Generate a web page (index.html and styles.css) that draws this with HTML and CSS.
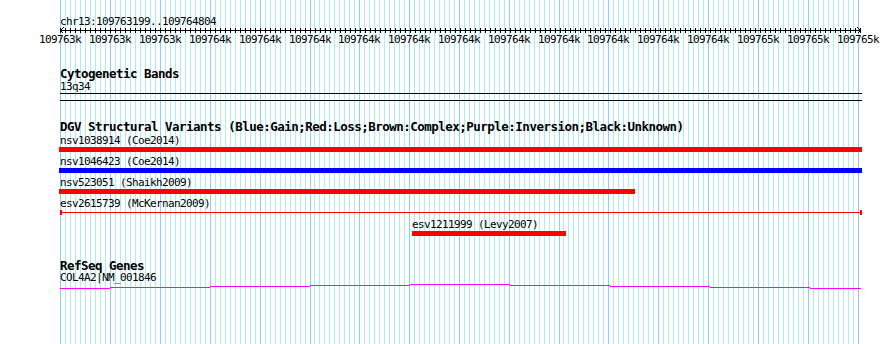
FILE: index.html
```html
<!DOCTYPE html>
<html lang="en">
<head>
  <meta charset="UTF-8">
  <title>chr13:109763199..109764804</title>
  <link rel="stylesheet" href="styles.css">
</head>
<body>
  <div class="panel"> <!-- the whole track image, grid drawn as background -->
    <div class="title">chr13:109763199..109764804</div>

    <!-- ruler with ticks and arrows -->
    <svg class="axis" width="810" height="7" shape-rendering="crispEdges">
      <defs>
        <pattern id="ticks" x="5" y="0" width="5" height="7" patternUnits="userSpaceOnUse">
          <path d="M0.5 1v5" stroke="#000"/>
        </pattern>
      </defs>
      <rect x="5" y="0" width="801" height="7" fill="url(#ticks)"/>
      <path d="M5 3.5H806M8.5 0.5L5.5 3.5L8.5 6.5M802.5 0.5L805.5 3.5L802.5 6.5" stroke="#000" fill="none"/>
    </svg>
    <div class="scale">
      <span>109763k</span><span>109763k</span><span>109763k</span>
      <span>109764k</span><span>109764k</span><span>109764k</span>
      <span class="nudge">109764k</span><span>109764k</span><span>109764k</span>
      <span>109764k</span><span>109764k</span><span class="nudge">109764k</span>
      <span>109764k</span><span>109764k</span><span>109765k</span>
      <span>109765k</span><span>109765k</span>
    </div>

    <!-- Cytogenetic Bands -->
    <div class="track cyto">
      <div class="track-name">Cytogenetic Bands</div>
      <div class="label short">13q34</div>
      <div class="band"></div>
    </div>

    <!-- DGV -->
    <div class="track dgv">
      <div class="track-name">DGV Structural Variants (Blue:Gain;Red:Loss;Brown:Complex;Purple:Inversion;Black:Unknown)</div>
      <div class="feat">
        <div class="label">nsv1038914 (Coe2014)</div>
        <div class="bar loss" style="margin-left:-1px;width:803px"></div>
      </div>
      <div class="feat">
        <div class="label">nsv1046423 (Coe2014)</div>
        <div class="bar gain" style="margin-left:-1px;width:803px"></div>
      </div>
      <div class="feat">
        <div class="label">nsv523051 (Shaikh2009)</div>
        <div class="bar loss" style="margin-left:-1px;width:576px"></div>
      </div>
      <div class="feat">
        <div class="label">esv2615739 (McKernan2009)</div>
        <div class="span-line" style="width:802px"></div>
      </div>
      <div class="feat" style="margin-left:352px">
        <div class="label">esv1211999 (Levy2007)</div>
        <div class="bar loss" style="width:154px"></div>
      </div>
    </div>

    <!-- RefSeq -->
    <div class="track refseq">
      <div class="track-name">RefSeq Genes</div>
      <div class="label short">COL4A2|NM_001846</div>
      <svg class="gene" width="802" height="6" shape-rendering="crispEdges">
        <path d="M0 4.5H50M50 3.5H150M150 2.5H250M250 1.5H350M350 0.5H450M450 1.5H550M550 2.5H650M650 3.5H750M750 4.5H801" stroke="#ff00ff" fill="none"/>
      </svg>
    </div>
  </div>
</body>
</html>
```

FILE: styles.css
```css
* {
  box-sizing: border-box;
}

body {
  margin: 0;
  background: #fff;
  color: #000;
  font-family: "DejaVu Sans Mono", monospace;
  font-size: 11px;
  letter-spacing: -0.62px;
}

/* image area; grid lines: major every ~50px, minor every 5px */
.panel {
  display: flex;
  flex-direction: column;
  align-items: flex-start;
  width: 890px;
  height: 344px;
  overflow: hidden;
  background-color: #fff;
  background-image:
    repeating-linear-gradient(to right, #87cefa 0 1px, transparent 1px 50px),
    repeating-linear-gradient(to right, #87cefa 0 1px, transparent 1px 50px),
    repeating-linear-gradient(to right, #87cefa 0 1px, transparent 1px 50px),
    repeating-linear-gradient(to right, #afeeee 0 1px, transparent 1px 5px),
    repeating-linear-gradient(to right, #afeeee 0 1px, transparent 1px 5px),
    repeating-linear-gradient(to right, #afeeee 0 1px, transparent 1px 5px);
  background-size: 251px 100%, 201px 100%, 251px 100%, 251px 100%, 246px 100%, 296px 100%;
  background-position: 60px 0, 359px 0, 608px 0, 60px 0, 314px 0, 563px 0;
  background-repeat: no-repeat;
}

.title {
  margin: 16px 0 0 60px;
  height: 11px;
  line-height: 11px;
}

.axis {
  display: block;
  margin-left: 55px;
}

.scale {
  display: flex;
  margin-left: 35px;
  height: 11px;
  line-height: 11px;
  white-space: nowrap;
}

.scale span {
  flex: 0 0 50px;
  text-align: center;
}

.scale .nudge {
  margin-left: -1px;
}

/* one track: name, then rows of features */
.track {
  display: flex;
  flex-direction: column;
  align-items: flex-start;
  margin-left: 60px;
}

.track-name {
  font-weight: bold;
  font-size: 12.5px;
  letter-spacing: -0.52px;
  height: 12px;
  line-height: 12px;
  white-space: nowrap;
}

.label {
  height: 13px;
  line-height: 13px;
  white-space: nowrap;
}

.label.short {
  height: 11px;
  line-height: 11px;
}

.cyto {
  margin-top: 23px;
}

.cyto .label {
  margin-top: 1px;
}

.band {
  width: 802px;
  height: 8px;
  margin-top: 1px;
  border-top: 1px solid #000;
  border-bottom: 1px solid #000;
}

.dgv {
  margin-top: 20px;
}

.dgv .track-name {
  margin-bottom: 1px;
}

.feat {
  display: flex;
  flex-direction: column;
  align-items: flex-start;
  margin-bottom: 3px;
}

.bar {
  height: 5px;
}

.loss {
  background: #ff0000;
}

.gain {
  background: #0000ff;
}

/* thin line with end caps */
.span-line {
  height: 5px;
  border-left: 2px solid #ff0000;
  border-right: 2px solid #ff0000;
  background: linear-gradient(#ff0000, #ff0000) 0 2px / 100% 1px no-repeat;
}

.refseq {
  margin-top: 21px;
}

.gene {
  display: block;
  margin-top: 1px;
}
```
